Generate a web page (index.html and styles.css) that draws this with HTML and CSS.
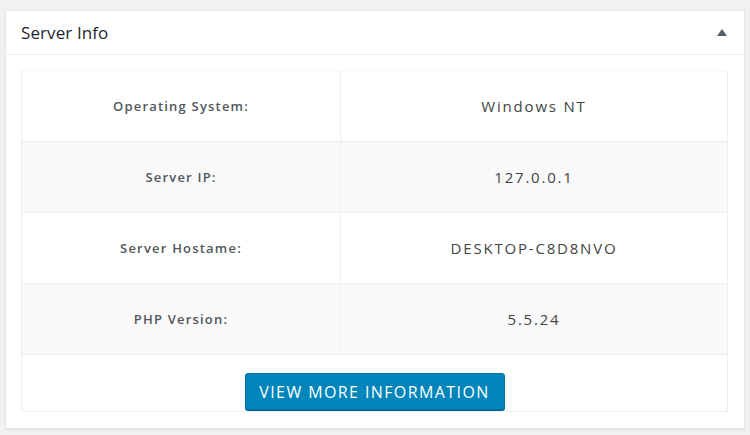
FILE: index.html
```html
<!DOCTYPE html>
<html>
<head>
	<title>Server Info</title>
	<meta charset="UTF-8">
	<link rel="stylesheet" href="styles.css">
</head>
<body>
	<div class="postbox">
		<div class="postbox-header">
			<h2 class="postbox-title">Server Info</h2>
			<button class="toggle" title="Toggle panel">
				<svg viewBox="0 0 10 7" width="10" height="7">
					<path fill="currentColor" d="M5 0L10 7H0z"/>
				</svg>
			</button>
		</div>

		<div class="inside">
			<div class="info-table">
				<div class="info-row">
					<div class="info-label">Operating System:</div>
					<div class="info-value">Windows NT</div>
				</div>
				<div class="info-row">
					<div class="info-label">Server IP:</div>
					<div class="info-value">127.0.0.1</div>
				</div>
				<div class="info-row">
					<div class="info-label">Server Hostame:</div>
					<div class="info-value">DESKTOP-C8D8NVO</div>
				</div>
				<div class="info-row">
					<div class="info-label">PHP Version:</div>
					<div class="info-value">5.5.24</div>
				</div>
				<div class="info-footer">
					<button class="button-primary">View More Information</button>
				</div>
			</div>
		</div>
	</div>
</body>
</html>
```

FILE: styles.css
```css
:root {
	--bg-color: #f1f1f1;
	--card-bg: #fff;
	--border-color: #e5e5e5;
	--line-color: #efefef;
	--stripe-bg: #f9f9f9;
	--text-color: #32373c;
	--primary-color: #0085ba;
	--primary-dark: #006799;
}

body {
	margin: 0;
	padding: 10px 5px 6px 5px;
	background: var(--bg-color);
	font-family: 'Open Sans', 'Noto Sans', sans-serif;
	color: var(--text-color);
}

.postbox {
	background: var(--card-bg);
	border: 1px solid var(--border-color);
	box-shadow: 0 1px 1px rgba(0,0,0,0.04);
}

.postbox-header {
	display: flex;
	justify-content: space-between;
	align-items: center;
	height: 43px;
	padding: 0 17px 0 15px;
	border-bottom: 1px solid #eee;
}

.postbox-title {
	margin: 0;
	font-size: 17px;
	font-weight: 500;
	letter-spacing: 0.1px;
	color: #23282d;
}

.toggle {
	background: none;
	border: none;
	padding: 0;
	color: #555d66;
	cursor: pointer;
}

svg {
	display: block;
}

.inside {
	padding: 15px 16px 16px 15px;
}

.info-table {
	border: 1px solid var(--line-color);
	border-top-color: #f5f5f5;
}

.info-row {
	display: grid;
	grid-template-columns: 319px 1fr;
	height: 70px;
	border-bottom: 1px solid var(--line-color);
}

.info-row:nth-child(even) {
	background: var(--stripe-bg);
}

.info-label,
.info-value {
	display: flex;
	align-items: center;
	justify-content: center;
}

.info-label {
	border-right: 1px solid var(--line-color);
	font-size: 13px;
	font-weight: 600;
	letter-spacing: 1.2px;
	color: #50575e;
}

.info-value {
	font-size: 15px;
	letter-spacing: 1.8px;
	color: #444;
}

.info-footer {
	display: flex;
	justify-content: center;
	padding: 18px 0 0 0;
	height: 38px;
}

.button-primary {
	width: 260px;
	height: 37px;
	padding: 0;
	border: 1px solid #0073aa;
	border-radius: 3px;
	background: var(--primary-color);
	box-shadow: 0 1px 0 var(--primary-dark);
	color: #fff;
	font-family: 'Open Sans', 'Noto Sans', sans-serif;
	font-size: 16px;
	font-weight: 500;
	letter-spacing: 1.4px;
	text-transform: uppercase;
	cursor: pointer;
}

.button-primary:hover {
	background: #008ec2;
}
```
